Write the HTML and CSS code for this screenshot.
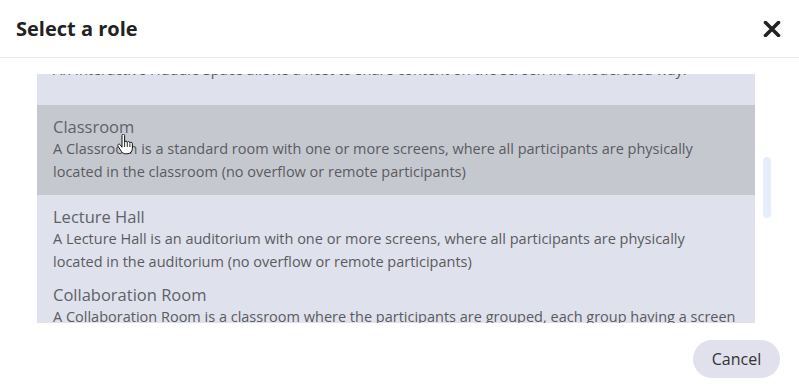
FILE: index.html
```html
<!DOCTYPE html>
<html>
<head>
<meta charset="utf-8">
<link rel="stylesheet" href="styles.css">
</head>
<body>
<div class="dialog">
  <header class="header">
    <h1 class="title">Select a role</h1>
    <button class="close" aria-label="Close">
      <svg width="18" height="16" viewBox="0 0 18 16"><path d="M2.5 1.5 L15.5 14.5 M15.5 1.5 L2.5 14.5" stroke="#222" stroke-width="3.6" stroke-linecap="round" fill="none"/></svg>
    </button>
  </header>
  <div class="content">
    <div class="list">
      <div class="scroller">
        <div class="item item-first">
          <div class="item-title">Interactive Huddle Space</div>
          <div class="item-desc">An Interactive Huddle Space allows a host to share content on the screen in a moderated way.</div>
        </div>
        <div class="item item-hover">
          <div class="item-title">Classroom</div>
          <div class="item-desc">A Classroom is a standard room with one or more screens, where all participants are physically located in the classroom (no overflow or remote participants)</div>
          <svg class="cursor" width="16" height="22" viewBox="0 0 16 22"><path d="M5 1.5c0-.8.6-1.4 1.3-1.4S7.6.7 7.6 1.5V8c.3-.6.8-.9 1.4-.9.8 0 1.3.6 1.3 1.3.3-.5.7-.8 1.3-.8.8 0 1.3.6 1.3 1.3.3-.4.7-.6 1.2-.6.8 0 1.3.6 1.3 1.4v4.5c0 3.2-2 5.6-5.2 5.6H8.5c-1.8 0-3-.8-4-2.2L1 12.2c-.4-.6-.3-1.4.3-1.8.6-.4 1.4-.3 1.8.3L5 13.2z" fill="#fff" stroke="#111" stroke-width="1"/><path d="M7.6 8v5M10.3 8.4v4.6M12.9 9.3v3.7" stroke="#111" stroke-width=".9"/></svg>
        </div>
        <div class="item item-tight">
          <div class="item-title">Lecture Hall</div>
          <div class="item-desc">A Lecture Hall is an auditorium with one or more screens, where all participants are physically located in the auditorium (no overflow or remote participants)</div>
        </div>
        <div class="item">
          <div class="item-title">Collaboration Room</div>
          <div class="item-desc">A Collaboration Room is a classroom where the participants are grouped, each group having a screen to collaborate on, with a host screen for the whole room</div>
        </div>
      </div>
    </div>
    <div class="track"><div class="thumb"></div></div>
  </div>
  <footer class="footer">
    <button class="cancel">Cancel</button>
  </footer>
</div>
</body>
</html>
```
FILE: styles.css
```css
html, body {
  margin: 0;
  padding: 0;
  background: #ffffff;
  font-family: "Open Sans", "Noto Sans", sans-serif;
}
.dialog {
  width: 799px;
  height: 391px;
  display: flex;
  flex-direction: column;
}
.header {
  height: 57px;
  border-bottom: 1px solid #e6e6ee;
  display: flex;
  align-items: center;
  justify-content: space-between;
  padding: 0 18px 0 16px;
  box-sizing: content-box;
}
.title {
  margin: 0;
  font-size: 20px;
  font-weight: 700;
  color: #222222;
  letter-spacing: 0;
}
.close {
  border: 0;
  background: none;
  padding: 0;
  width: 18px;
  height: 16px;
  display: flex;
}
.content {
  display: flex;
  padding: 16px 0 0 37px;
  gap: 8px;
}
.list {
  width: 718px;
  height: 249px;
  overflow: hidden;
  background: #dfe1ec;
}
.scroller {
  margin-top: -48.5px;
}
.item {
  padding: 12px 18px 0 16px;
  position: relative;
}
.item-first {
  padding-bottom: 24.5px;
}
.item-hover {
  background: #c6c8d0;
  padding-bottom: 12px;
}
.item-title {
  font-size: 16.5px;
  line-height: 20px;
  color: #606268;
}
.item-desc {
  font-size: 14.5px;
  line-height: 23px;
  color: #5a5b60;
}
.cursor {
  position: absolute;
  left: 80px;
  top: 29px;
}
.track {
  width: 8px;
  padding-top: 83px;
}
.thumb {
  height: 61px;
  border-radius: 4px;
  background: #e5eefa;
}
.footer {
  display: flex;
  justify-content: flex-end;
  padding: 17px 19px 0 0;
}
.cancel {
  width: 87px;
  height: 38px;
  border: 0;
  border-radius: 19px;
  background: #e0e1ec;
  font-family: "Open Sans", "Noto Sans", sans-serif;
  font-size: 16px;
  color: #333333;
  padding: 0;
}
```
